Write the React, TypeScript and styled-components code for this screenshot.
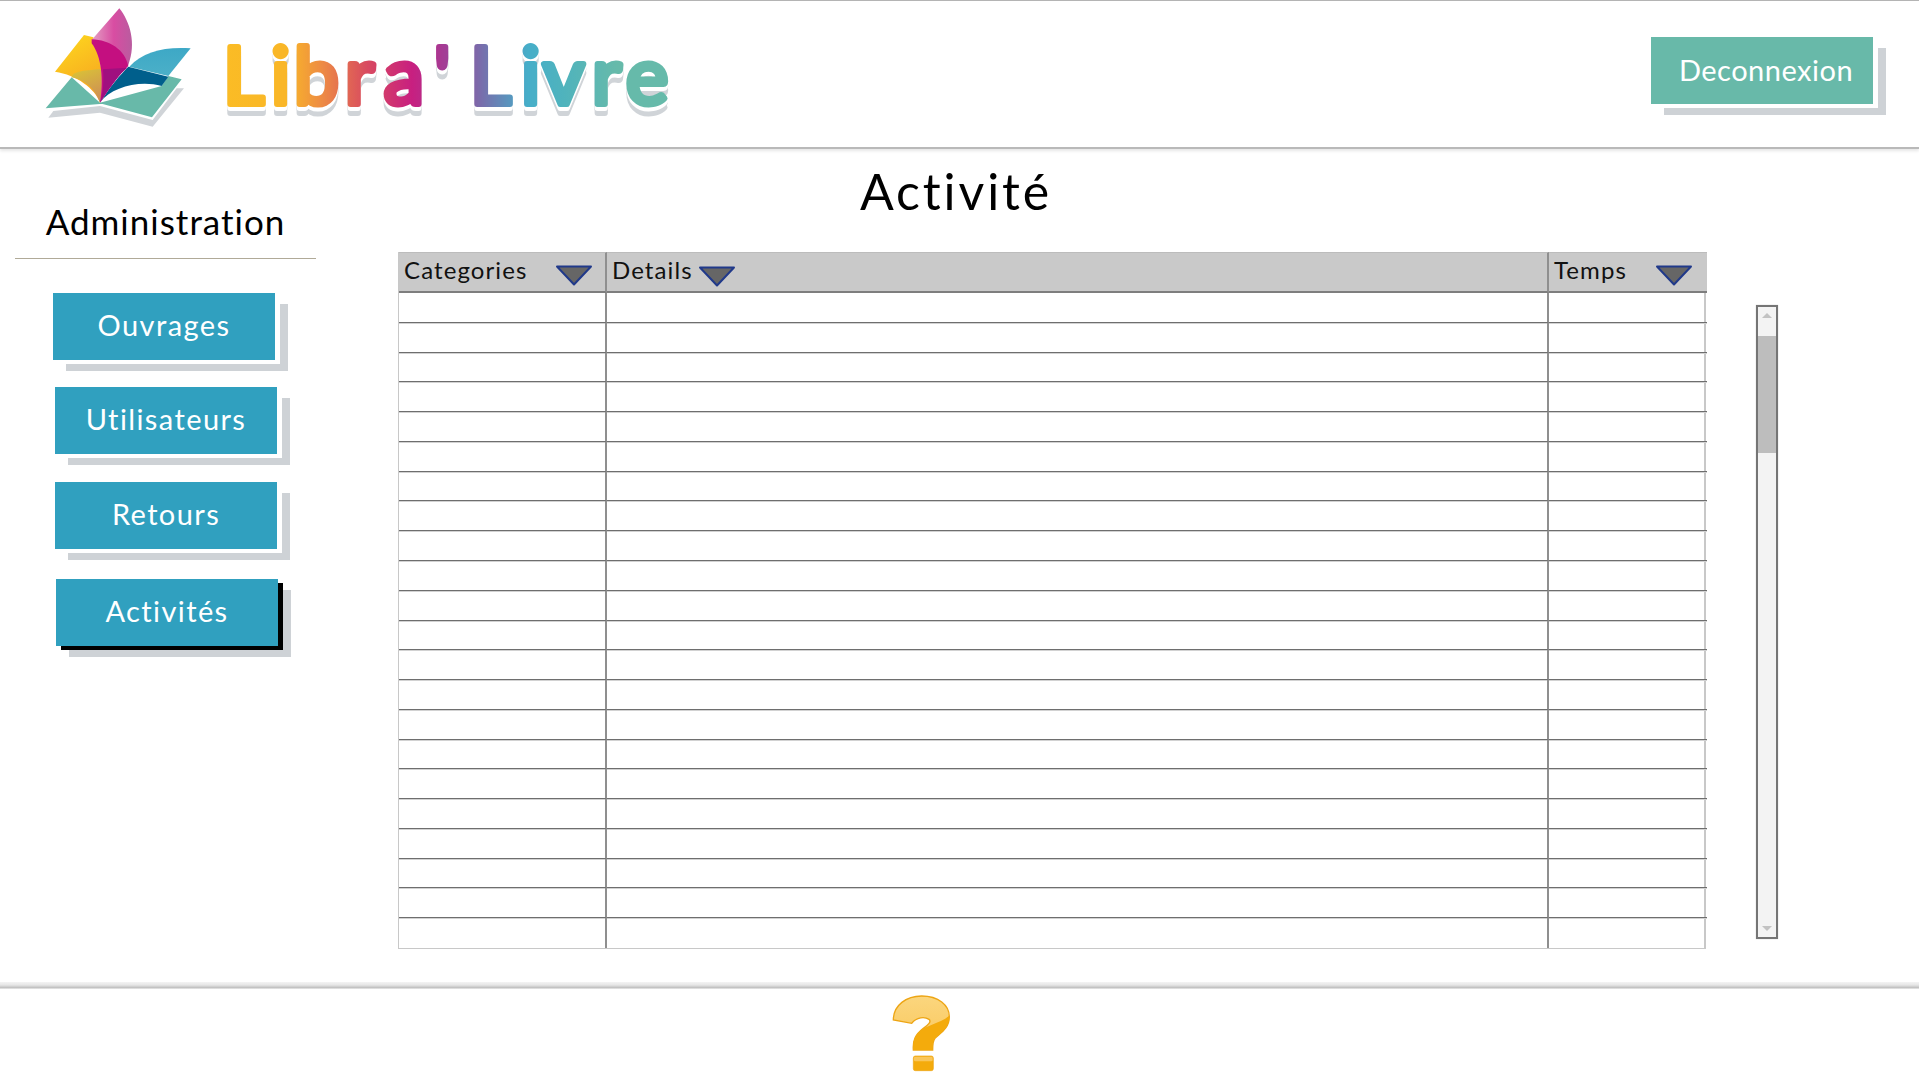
import React from 'react';
import styled, { createGlobalStyle } from 'styled-components';

const FONT = `'Lato', 'Open Sans', sans-serif`;
const ROW_COUNT = 22;

const GlobalStyle = createGlobalStyle`
  html, body {
    margin: 0;
    padding: 0;
    background: #fff;
    font-family: ${FONT};
  }
  * {
    box-sizing: border-box;
  }
`;

const Page = styled.div`
  width: 1919px;
  height: 1079px;
  overflow: hidden;
  display: flex;
  flex-direction: column;
  background: #fff;
  border-top: 1px solid #b4b4b4;
`;

const Header = styled.header`
  height: 148px;
  flex: none;
  display: flex;
  justify-content: space-between;
  align-items: flex-start;
  border-bottom: 2px solid #b9b9b9;
  box-shadow: 0 2px 3px rgba(0, 0, 0, 0.1);
  padding: 36px 46px 0 0;
`;

const LogoSvg = styled.svg`
  width: 700px;
  height: 144px;
  margin-top: -36px;
  flex: none;
`;

const LogoText = styled.text`
  font-family: 'Lato', sans-serif;
  font-weight: 400;
  font-size: 80px;
  stroke-width: 6px;
  stroke-linejoin: round;
  stroke-linecap: round;
  filter: drop-shadow(0 4px 0 #fff) drop-shadow(0 5px 0 #d0d4d8);
`;

const ActionButton = styled.button<{ $bg?: string; $active?: boolean; $left?: number; $top?: number; $tight?: boolean }>`
  width: 222px;
  height: 67px;
  flex: none;
  display: flex;
  align-items: center;
  justify-content: center;
  border: 0;
  padding: ${({ $tight }) => ($tight ? '0 0 2px 8px' : '0 0 4px')};
  margin: ${({ $top }) => $top ?? 0}px 0 0 ${({ $left }) => $left ?? 0}px;
  background: ${({ $bg }) => $bg ?? '#30a0bf'};
  color: #fff;
  font-family: ${FONT};
  font-size: 29px;
  letter-spacing: ${({ $tight }) => ($tight ? 0.5 : 1.4)}px;
  box-shadow: 5px 4px 0 ${({ $active }) => ($active ? '#000' : '#fff')}, 13px 11px 0 #ced2d6;
`;

const Main = styled.main`
  flex: 1;
  display: flex;
  min-height: 0;
`;

const Sidebar = styled.nav`
  width: 398px;
  flex: none;
  display: flex;
  flex-direction: column;
`;

const SideTitle = styled.h2`
  width: 301px;
  height: 66px;
  margin: 44px 0 0 15px;
  padding-top: 7px;
  border-bottom: 1px solid #b0aa98;
  font-family: ${FONT};
  font-weight: 400;
  font-size: 35px;
  letter-spacing: 1px;
  line-height: 42px;
  color: #000;
  text-align: center;
`;

const Content = styled.section`
  flex: 1;
  display: flex;
  flex-direction: column;
  min-width: 0;
`;

const PageTitle = styled.h1`
  width: 1116px;
  height: 56px;
  margin: 14px 0 33px 0;
  font-family: ${FONT};
  font-weight: 400;
  font-size: 50px;
  letter-spacing: 2.9px;
  line-height: 56px;
  text-align: center;
  color: #000;
`;

const TableRow = styled.div`
  display: flex;
  align-items: flex-start;
  gap: 50px;
`;

const Grid = styled.div`
  width: 1308px;
  height: 697px;
  flex: none;
  display: grid;
  grid-template-columns: 208px 942px 158px;
  grid-template-rows: 41px repeat(${ROW_COUNT}, 1fr);
  border-left: 1px solid #c8c8c8;
  border-right: 2px solid #c8c8c8;
  border-bottom: 1px solid #c8c8c8;
`;

const HeadCell = styled.div<{ $spread?: boolean; $last?: boolean }>`
  display: flex;
  align-items: center;
  justify-content: ${({ $spread }) => ($spread ? 'space-between' : 'flex-start')};
  gap: 5px;
  padding: 0 ${({ $last }) => ($last ? 14 : 12)}px 6px 5px;
  background: #c9c9c9;
  border-top: 1px solid #bcbcbc;
  border-bottom: 2px solid #7e7e7e;
  border-right: ${({ $last }) => ($last ? '0' : '2px solid #8f8f8f')};
  font-size: 24px;
  letter-spacing: 1.1px;
  color: #111;
`;

const BodyCell = styled.div<{ $last?: boolean; $end?: boolean }>`
  border-right: ${({ $last }) => ($last ? '0' : '2px solid #8f8f8f')};
  border-bottom: ${({ $end }) => ($end ? '0' : '1px solid #6e6e6e')};
  box-shadow: ${({ $end }) => ($end ? 'none' : '0 1px 0 #d2d2d2')};
`;

const SortSvg = styled.svg<{ $drop: number }>`
  width: 38px;
  height: 21px;
  flex: none;
  margin-top: ${({ $drop }) => $drop}px;
`;

const Scrollbar = styled.div`
  width: 22px;
  height: 634px;
  margin-top: 53px;
  flex: none;
  display: flex;
  flex-direction: column;
  background: #f3f3f3;
  border: 2px solid #757575;
  box-shadow: 0 0 1px #bbb;
`;

const ScrollArrow = styled.div<{ $down?: boolean }>`
  height: 29px;
  flex: none;
  display: flex;
  justify-content: center;
  align-items: ${({ $down }) => ($down ? 'flex-end' : 'flex-start')};
  padding: ${({ $down }) => ($down ? '0 0 6px' : '6px 0 0')};
  &::before {
    content: '';
    width: 0;
    height: 0;
    border-left: 5px solid transparent;
    border-right: 5px solid transparent;
    border-${({ $down }) => ($down ? 'top' : 'bottom')}: 5px solid #c2c2c2;
  }
`;

const ScrollThumb = styled.div`
  height: 117px;
  flex: none;
  background: #bdbdbd;
`;

const ScrollTrack = styled.div`
  flex: 1;
`;

const Footer = styled.footer`
  height: 97px;
  flex: none;
  display: flex;
  justify-content: center;
  padding: 12px 79px 0 0;
  background: linear-gradient(#f4f4f4 0, #e6e6e6 3px, #bcbcbc 6px, #fff 7px);
`;

const HelpSvg = styled.svg`
  width: 60px;
  height: 78px;
`;

const SortIcon = ({ drop = 12 }: { drop?: number }) => (
  <SortSvg $drop={drop} viewBox="0 0 38 21">
    <path d="M2 1.5H36L19 19.5Z" fill="#666" stroke="#20398a" strokeWidth="2" strokeLinejoin="round" />
  </SortSvg>
);

const Logo = () => (
  <LogoSvg viewBox="0 0 700 144">
    <defs>
      <linearGradient id="word" gradientUnits="userSpaceOnUse" x1="225" y1="0" x2="670" y2="0">
        <stop offset="0" stopColor="#fbbc25" />
        <stop offset="0.14" stopColor="#f9b628" />
        <stop offset="0.22" stopColor="#ed8a45" />
        <stop offset="0.32" stopColor="#d84a60" />
        <stop offset="0.42" stopColor="#c81f80" />
        <stop offset="0.5" stopColor="#a03f97" />
        <stop offset="0.58" stopColor="#7670ad" />
        <stop offset="0.68" stopColor="#46aec9" />
        <stop offset="0.76" stopColor="#4fb3bd" />
        <stop offset="0.88" stopColor="#66baaa" />
      </linearGradient>
      <linearGradient id="yellow" x1="0.3" y1="0" x2="0.7" y2="1">
        <stop offset="0" stopColor="#fdd51e" />
        <stop offset="1" stopColor="#f6a021" />
      </linearGradient>
      <linearGradient id="olive" x1="0.3" y1="0" x2="0.7" y2="1">
        <stop offset="0" stopColor="#d9c038" />
        <stop offset="1" stopColor="#cd8b57" />
      </linearGradient>
      <linearGradient id="pink" x1="0" y1="0" x2="1" y2="0">
        <stop offset="0" stopColor="#e4a0c4" />
        <stop offset="0.55" stopColor="#d84da2" />
        <stop offset="1" stopColor="#b95c9f" />
      </linearGradient>
      <linearGradient id="blue" x1="0" y1="0" x2="0" y2="1">
        <stop offset="0" stopColor="#3da8c6" />
        <stop offset="1" stopColor="#4bb0c8" />
      </linearGradient>
    </defs>
    <g transform="translate(30 -1) scale(0.3333)">
      <path d="M55 353L210 338L368 380L462 265L440 265L368 360L210 318L70 333Z" fill="#d0d4d8" />
      <path d="M47 325L125 232L210 308L395 258L415 228L455 238L366 352L218 312L210 312Z" fill="#68b9a9" />
      <path d="M75 215L162 105L190 112C215 170 222 240 210 308C195 265 140 225 75 215Z" fill="url(#yellow)" />
      <path d="M125 232C130 215 150 212 218 207C222 250 218 285 210 308C195 265 165 240 125 232Z" fill="url(#olive)" />
      <path d="M482 145C400 140 340 155 298 200L415 228Z" fill="url(#blue)" />
      <path d="M295 200L415 230L395 258C330 240 245 260 210 308C240 260 270 225 295 200Z" fill="#005f8c" />
      <path d="M268 25C300 65 320 130 295 195C270 220 240 260 210 308C222 240 215 170 185 120Z" fill="url(#pink)" />
      <path d="M185 118C240 120 285 150 295 198C270 220 240 260 210 308C222 240 215 170 185 130Z" fill="#c40f80" />
      <path d="M219 208L292 203C270 220 240 260 210 308C220 280 222 240 219 208Z" fill="#a0107f" />
    </g>
    <LogoText
      x="223 271 294 345 384 434 470 521 543 592 626"
      y="103"
      fill="url(#word)"
      stroke="url(#word)"
    >
      Libra'Livre
    </LogoText>
  </LogoSvg>
);

const HelpIcon = () => {
  const outline =
    'M100 150C100 105 140 78 185 78C235 78 268 105 268 140C268 175 240 190 225 205C218 213 218 222 218 240L160 240C158 210 165 195 190 175C205 165 215 155 207 148C195 140 170 140 155 160Z';
  return (
    <HelpSvg viewBox="90 72 180 234">
      <defs>
        <linearGradient id="helpTop" x1="0" y1="0" x2="0" y2="1">
          <stop offset="0" stopColor="#fbd67e" />
          <stop offset="1" stopColor="#f9c65a" />
        </linearGradient>
        <clipPath id="helpClip">
          <path d={outline} />
        </clipPath>
      </defs>
      <path d={outline} fill="url(#helpTop)" stroke="#eda514" strokeWidth="4" />
      <g clipPath="url(#helpClip)">
        <path d="M272 132C250 160 190 165 150 200L150 250L272 250Z" fill="#f4ab0c" />
      </g>
      <rect x="160" y="258" width="60" height="44" rx="6" fill="#f4ab0c" stroke="#eda514" strokeWidth="2" />
      <rect x="162" y="260" width="56" height="14" rx="4" fill="#f9c65a" />
    </HelpSvg>
  );
};

const sideItems = [
  { label: 'Ouvrages', left: 53, top: 34 },
  { label: 'Utilisateurs', left: 55, top: 27 },
  { label: 'Retours', left: 55, top: 28 },
  { label: 'Activités', left: 56, top: 30, active: true },
];

export default function App() {
  const rows = Array.from({ length: ROW_COUNT }, (_, i) => i);

  return (
    <>
      <GlobalStyle />
      <Page>
        <Header>
          <Logo />
          <ActionButton $bg="#68b9a9" $tight>
            Deconnexion
          </ActionButton>
        </Header>
        <Main>
          <Sidebar>
            <SideTitle>Administration</SideTitle>
            {sideItems.map((item) => (
              <ActionButton key={item.label} $left={item.left} $top={item.top} $active={item.active}>
                {item.label}
              </ActionButton>
            ))}
          </Sidebar>
          <Content>
            <PageTitle>Activité</PageTitle>
            <TableRow>
              <Grid>
                <HeadCell $spread>
                  Categories
                  <SortIcon />
                </HeadCell>
                <HeadCell>
                  Details
                  <SortIcon drop={14} />
                </HeadCell>
                <HeadCell $spread $last>
                  Temps
                  <SortIcon />
                </HeadCell>
                {rows.map((row) => (
                  <React.Fragment key={row}>
                    <BodyCell $end={row === ROW_COUNT - 1} />
                    <BodyCell $end={row === ROW_COUNT - 1} />
                    <BodyCell $end={row === ROW_COUNT - 1} $last />
                  </React.Fragment>
                ))}
              </Grid>
              <Scrollbar>
                <ScrollArrow />
                <ScrollThumb />
                <ScrollTrack />
                <ScrollArrow $down />
              </Scrollbar>
            </TableRow>
          </Content>
        </Main>
        <Footer>
          <HelpIcon />
        </Footer>
      </Page>
    </>
  );
}
